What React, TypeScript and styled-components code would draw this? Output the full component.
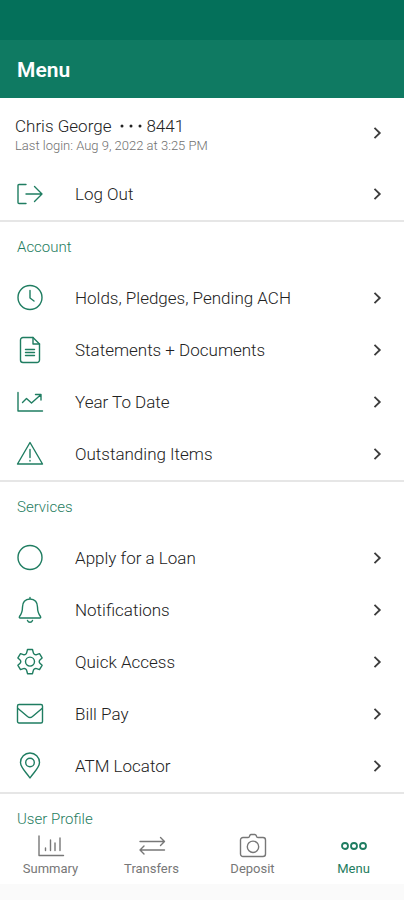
import React from "react";
import styled, { createGlobalStyle } from "styled-components";

const green = "#1f7d61";

const GlobalStyle = createGlobalStyle`
  *, *::before, *::after { box-sizing: border-box; }
  body {
    margin: 0;
    background: #fff;
    color: #222;
    font-family: Roboto, "Liberation Sans", sans-serif;
    font-weight: 300;
  }
`;

const Screen = styled.div`
  display: flex;
  flex-direction: column;
  height: 100vh;
`;

const StatusBar = styled.div`
  flex: none;
  height: 40px;
  background: #04705a;
`;

const Header = styled.header`
  flex: none;
  display: flex;
  align-items: center;
  height: 58px;
  padding: 3px 17px 0;
  background: #0f7a62;
`;

const Title = styled.h1`
  margin: 0;
  color: #fff;
  font-size: 21px;
  line-height: 27px;
  font-weight: 600;
`;

const Content = styled.main`
  flex: 1;
  min-height: 0;
  overflow-y: auto;
  scrollbar-width: none;
`;

const Section = styled.section`
  & + & {
    border-top: 2px solid #e6e6e6;
  }
`;

const SectionTitle = styled.h2`
  margin: 0;
  padding: 15px 17px;
  color: ${green};
  font-size: 15px;
  line-height: 20px;
  font-weight: 300;
`;

const List = styled.ul`
  margin: 0;
  padding: 0;
  list-style: none;
`;

const Row = styled.button`
  display: flex;
  align-items: center;
  width: 100%;
  height: 52px;
  padding: 0 20px 0 16px;
  border: 0;
  background: none;
  color: inherit;
  font: inherit;
  text-align: left;
  cursor: pointer;
`;

const ProfileRow = styled(Row)`
  height: 70px;
  padding-left: 15px;
`;

const RowIcon = styled.span`
  display: flex;
  flex: none;
  width: 59px;
  color: ${green};
`;

const RowLabel = styled.span`
  flex: 1;
  font-size: 17px;
  line-height: 22px;
`;

const ProfileText = styled.span`
  flex: 1;
  display: flex;
  flex-direction: column;
  padding-top: 4px;
`;

const ProfileName = styled.span`
  display: flex;
  align-items: center;
  font-size: 17px;
  line-height: 22px;
`;

const MaskDots = styled.svg`
  margin: 0 3px 0 8px;
`;

const LastLogin = styled.span`
  color: #707070;
  font-size: 13px;
  line-height: 18px;
`;

const TabBar = styled.nav`
  flex: none;
  display: grid;
  grid-template-columns: repeat(4, 1fr);
  height: 55px;
  background: #fff;
`;

const Tab = styled.a<{ $active?: boolean }>`
  display: flex;
  flex-direction: column;
  align-items: center;
  padding-top: 3px;
  color: ${(p) => (p.$active ? green : "#777")};
  font-size: 13px;
  line-height: 18px;
  font-weight: 400;
  text-decoration: none;
`;

const GestureArea = styled.div`
  flex: none;
  height: 16px;
  background: #fafafa;
`;

const Icon = ({ children }: { children: React.ReactNode }) => (
  <svg
    width="28"
    height="28"
    viewBox="0 0 28 28"
    fill="none"
    stroke="currentColor"
    strokeWidth="1.4"
    strokeLinecap="round"
    strokeLinejoin="round"
    aria-hidden="true"
  >
    {children}
  </svg>
);

const Chevron = () => (
  <svg width="12" height="14" viewBox="0 0 12 14" fill="none" stroke="#3c3c3c" strokeWidth="1.8" aria-hidden="true">
    <path d="M2.500 1.800 7.800 7 2.500 12.200" />
  </svg>
);

const icons = {
  logout: <path d="M10 4.500H3a1 1 0 0 0-1 1v17a1 1 0 0 0 1 1h7M10 14h16M18.500 6.500l7.500 7.500-7.500 7.500" />,
  clock: (
    <>
      <circle cx="14" cy="13.500" r="12" />
      <path d="M14 6.500v7.500l4 3" />
    </>
  ),
  document: (
    <>
      <path d="M17 1.500H7A2.500 2.500 0 0 0 4.500 4v20A2.500 2.500 0 0 0 7 26.500h14a2.500 2.500 0 0 0 2.500-2.500V8z" />
      <path d="M17 1.500V8h6.500" />
      <path d="M9.500 13.500h9M9.500 16.500h9M9.500 19.500h9" />
    </>
  ),
  trend: (
    <>
      <path d="M2 4.500v18.500H26.500" />
      <path d="M6.500 14.500l4-4 5 4.500L24.500 7M19.500 6.500H25V12" />
    </>
  ),
  warning: (
    <>
      <path d="M14 2.500 26.500 24H1.500z" />
      <path d="M14 9.500v8M14 20.500v.5" />
    </>
  ),
  circle: <circle cx="14" cy="13.500" r="12" />,
  bell: (
    <>
      <path d="M14 3c-5 0-7.500 3.500-7.500 8 0 5-1 7-3 9.500-.5.8-.2 1.500.7 1.500h19.600c.9 0 1.200-.7.7-1.500-2-2.500-3-4.500-3-9.500 0-4.500-2.500-8-7.500-8zM14 3V1.500" />
      <path d="M11.500 24.500c.5 1.300 1.400 1.800 2.500 1.800s2-.5 2.500-1.800" />
    </>
  ),
  gear: (
    <>
      <path d="M11.500 1.500h5l.8 3.200a2.500 2.500 0 0 0 3.300 1.900l2.900-1 2.600 4.300-2.200 2.100a2.200 2.200 0 0 0 0 3.200l2.200 2.100-2.600 4.300-2.900-1a2.500 2.500 0 0 0-3.300 1.900l-.8 3.200h-5l-.8-3.200a2.500 2.500 0 0 0-3.300-1.900l-2.900 1-2.600-4.300 2.200-2.100a2.200 2.200 0 0 0 0-3.200L1.900 9.900l2.600-4.300 2.900 1a2.500 2.500 0 0 0 3.300-1.900z" />
      <circle cx="14" cy="13.600" r="4.500" />
    </>
  ),
  mail: (
    <>
      <rect x="1.500" y="4.500" width="25" height="18.500" rx="1.500" />
      <path d="M2 8.500 11.500 16.500a3.800 3.800 0 0 0 5 0L26 8.500" />
    </>
  ),
  pin: (
    <>
      <path d="M14 26C11 21 4.500 16 4.500 10.500a9.500 9.500 0 0 1 19 0C23.500 16 17 21 14 26z" />
      <circle cx="14" cy="10.500" r="4.300" />
    </>
  ),
  summary: <path d="M2 4v19.500h24.500M8.500 16v2.500M13.500 8v10.500M18 11v7.500M23 6v12.500" />,
  transfers: <path d="M2 9.500h24.500l-4-4M26.500 9.500l-4 4M26.500 18H2l4-4M2 18l4 4" />,
  camera: (
    <>
      <path d="M7.500 5.500h1.500a1.500 1.500 0 0 0 1.500-1.200l.3-.8A1.500 1.500 0 0 1 12.200 2.500h3.600a1.500 1.500 0 0 1 1.400 1l.3.800A1.500 1.500 0 0 0 19 5.500h5A2.500 2.500 0 0 1 26.500 8v14a2.500 2.500 0 0 1-2.500 2.500H4A2.500 2.500 0 0 1 1.500 22V8A2.500 2.500 0 0 1 4 5.500z" />
      <circle cx="14" cy="14.800" r="5.700" />
    </>
  ),
  more: (
    <g strokeWidth="1.800">
      <circle cx="5" cy="14" r="3" />
      <circle cx="14" cy="14" r="3" />
      <circle cx="23" cy="14" r="3" />
    </g>
  ),
};

type IconName = keyof typeof icons;
type Item = { label: string; icon: IconName };

const account: Item[] = [
  { label: "Holds, Pledges, Pending ACH", icon: "clock" },
  { label: "Statements + Documents", icon: "document" },
  { label: "Year To Date", icon: "trend" },
  { label: "Outstanding Items", icon: "warning" },
];

const services: Item[] = [
  { label: "Apply for a Loan", icon: "circle" },
  { label: "Notifications", icon: "bell" },
  { label: "Quick Access", icon: "gear" },
  { label: "Bill Pay", icon: "mail" },
  { label: "ATM Locator", icon: "pin" },
];

const tabs: Item[] = [
  { label: "Summary", icon: "summary" },
  { label: "Transfers", icon: "transfers" },
  { label: "Deposit", icon: "camera" },
  { label: "Menu", icon: "more" },
];

const MenuRow = ({ label, icon }: Item) => (
  <Row type="button">
    <RowIcon>
      <Icon>{icons[icon]}</Icon>
    </RowIcon>
    <RowLabel>{label}</RowLabel>
    <Chevron />
  </Row>
);

const MenuSection = ({ title, items }: { title: string; items: Item[] }) => (
  <Section>
    <SectionTitle>{title}</SectionTitle>
    <List>
      {items.map((item) => (
        <li key={item.label}>
          <MenuRow {...item} />
        </li>
      ))}
    </List>
  </Section>
);

export default function App() {
  return (
    <>
      <GlobalStyle />
      <Screen>
        <StatusBar />
        <Header>
          <Title>Menu</Title>
        </Header>
        <Content>
          <Section>
            <ProfileRow type="button">
              <ProfileText>
                <ProfileName>
                  Chris George
                  <MaskDots width="24" height="4" viewBox="0 0 24 4" fill="currentColor" aria-hidden="true">
                    <circle cx="3" cy="2" r="1.500" />
                    <circle cx="12" cy="2" r="1.500" />
                    <circle cx="21" cy="2" r="1.500" />
                  </MaskDots>
                  8441
                </ProfileName>
                <LastLogin>Last login: Aug 9, 2022 at 3:25 PM</LastLogin>
              </ProfileText>
              <Chevron />
            </ProfileRow>
            <MenuRow label="Log Out" icon="logout" />
          </Section>
          <MenuSection title="Account" items={account} />
          <MenuSection title="Services" items={services} />
          <Section>
            <SectionTitle>User Profile</SectionTitle>
          </Section>
        </Content>
        <TabBar aria-label="Main">
          {tabs.map(({ label, icon }) => (
            <Tab key={label} href={`#${label.toLowerCase()}`} $active={label === "Menu"}>
              <Icon>{icons[icon]}</Icon>
              {label}
            </Tab>
          ))}
        </TabBar>
        <GestureArea />
      </Screen>
    </>
  );
}
